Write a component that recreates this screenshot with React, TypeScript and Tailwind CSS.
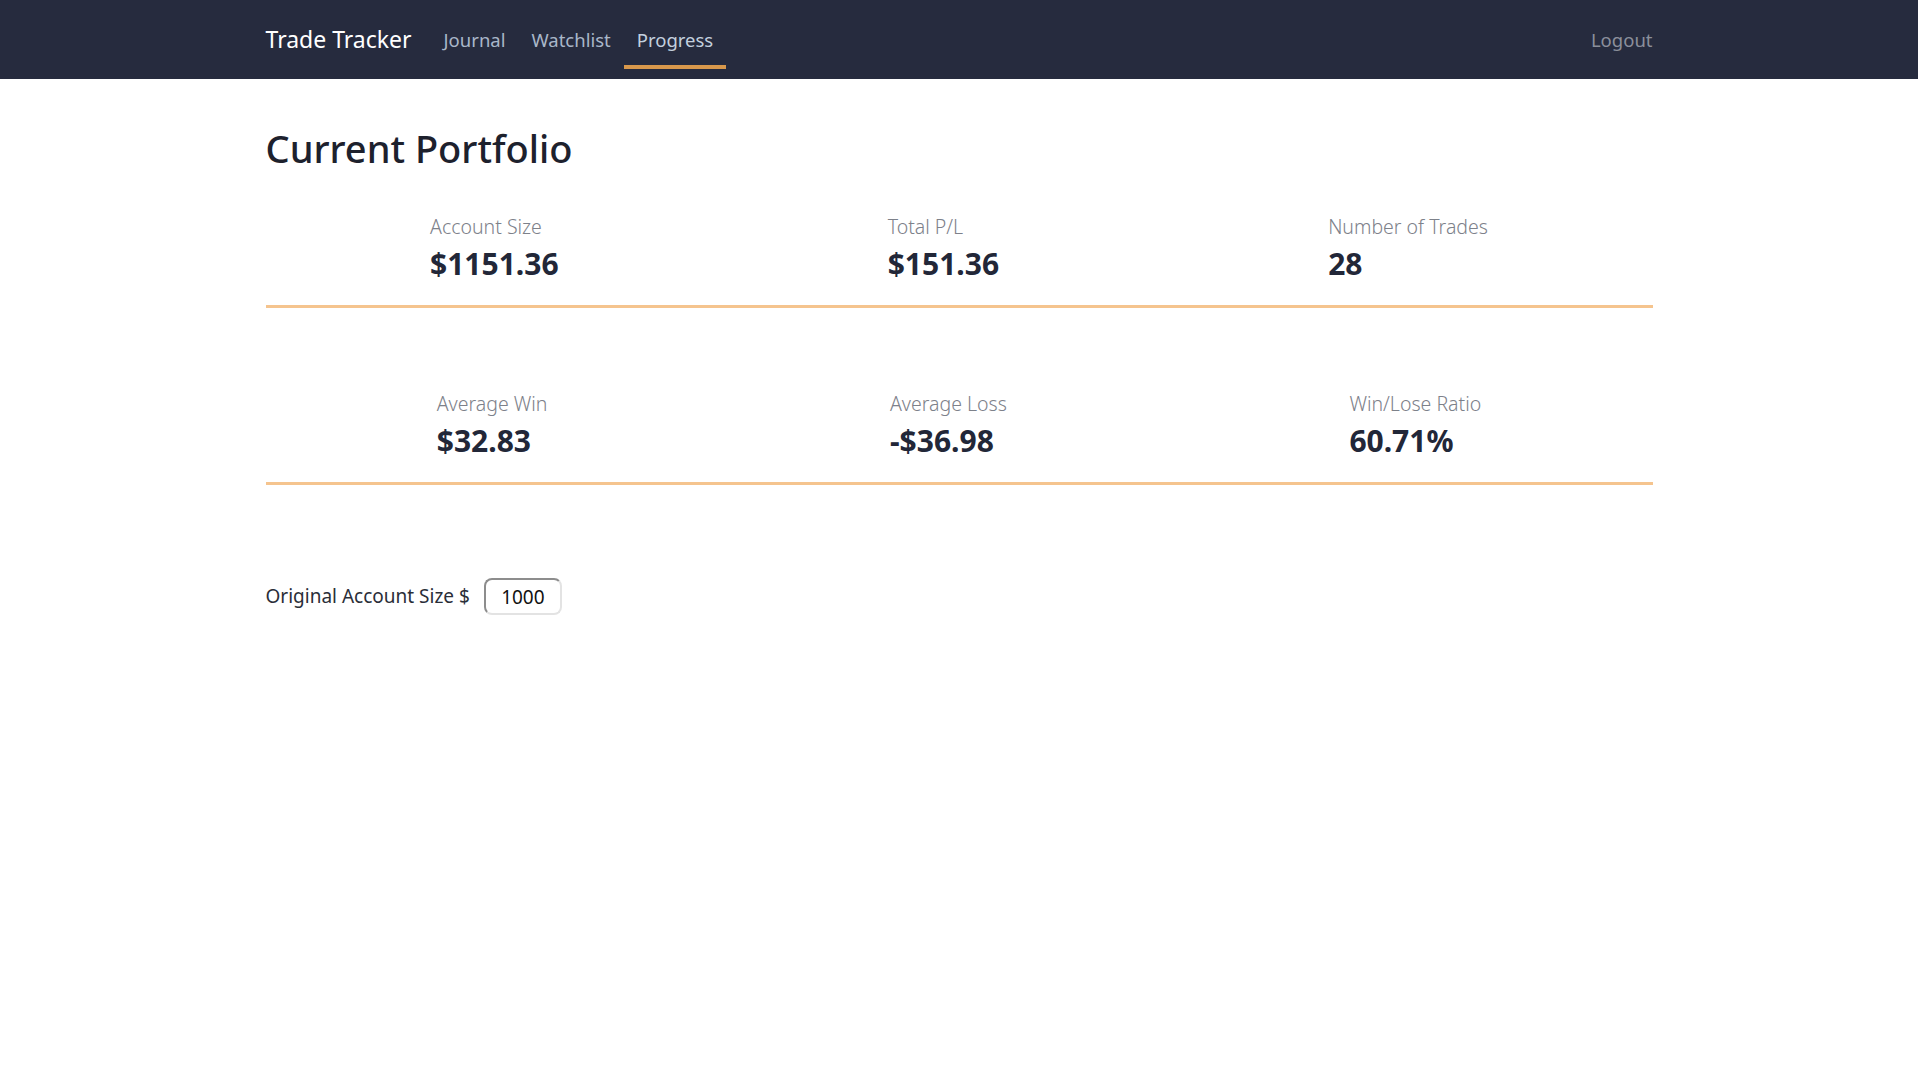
import React from "react";

type Stat = { label: string; value: string };

const rowOne: Stat[] = [
  { label: "Account Size", value: "$1151.36" },
  { label: "Total P/L", value: "$151.36" },
  { label: "Number of Trades", value: "28" },
];

const rowTwo: Stat[] = [
  { label: "Average Win", value: "$32.83" },
  { label: "Average Loss", value: "-$36.98" },
  { label: "Win/Lose Ratio", value: "60.71%" },
];

const StatRow: React.FC<{ stats: Stat[]; className?: string }> = ({ stats, className }) => (
  <div className={`flex justify-around border-b-[3px] border-[#f5c48e] pb-[23px] ${className ?? ""}`}>
    {stats.map((s) => (
      <div key={s.label} className="flex flex-col">
        <span className="text-[19.5px] leading-[28px] font-light text-[#7d818a]">{s.label}</span>
        <span className="mt-[5px] text-[30px] leading-[36px] font-bold text-[#222738]">{s.value}</span>
      </div>
    ))}
  </div>
);

export default function App() {
  return (
    <div className="min-h-screen bg-white font-['Noto_Sans','Open_Sans',sans-serif] text-[#212529]">
      {/* Navbar */}
      <nav className="h-[79px] bg-[#262b3e]">
        <div className="mx-auto flex h-full w-[1387px] items-center">
          <span className="mr-[19px] text-[23px] text-white">Trade Tracker</span>
          <div className="flex h-full items-center">
            <a className="px-[13px] text-[18.5px] text-[#a9b7c9]">Journal</a>
            <a className="px-[13px] text-[18.5px] text-[#a9b7c9]">Watchlist</a>
            <a className="relative flex h-full items-center px-[13px] text-[18.5px] text-[#c3d0de]">
              Progress
              <span className="absolute bottom-[10px] left-0 right-0 h-[4px] bg-[#d8984c]" />
            </a>
          </div>
          <a className="ml-auto text-[18.5px] text-[#8b8f9b]">Logout</a>
        </div>
      </nav>

      <main className="mx-auto w-[1387px]">
        <h1 className="mt-[44px] text-[38px] leading-[50px] font-medium text-[#1d212d]">Current Portfolio</h1>

        <StatRow stats={rowOne} className="mt-[40px]" />
        <StatRow stats={rowTwo} className="mt-[82px]" />

        <div className="mt-[93px] flex items-center gap-[14px]">
          <label className="text-[19px] text-[#2a2e38]">Original Account Size $</label>
          <input
            defaultValue="1000"
            className="h-[37px] w-[78px] rounded-[8px] border-2 border-t-[#8d8d8d] border-l-[#8d8d8d] border-r-[#e3e3e3] border-b-[#e3e3e3] text-center text-[19px] text-[#111]"
          />
        </div>
      </main>
    </div>
  );
}
